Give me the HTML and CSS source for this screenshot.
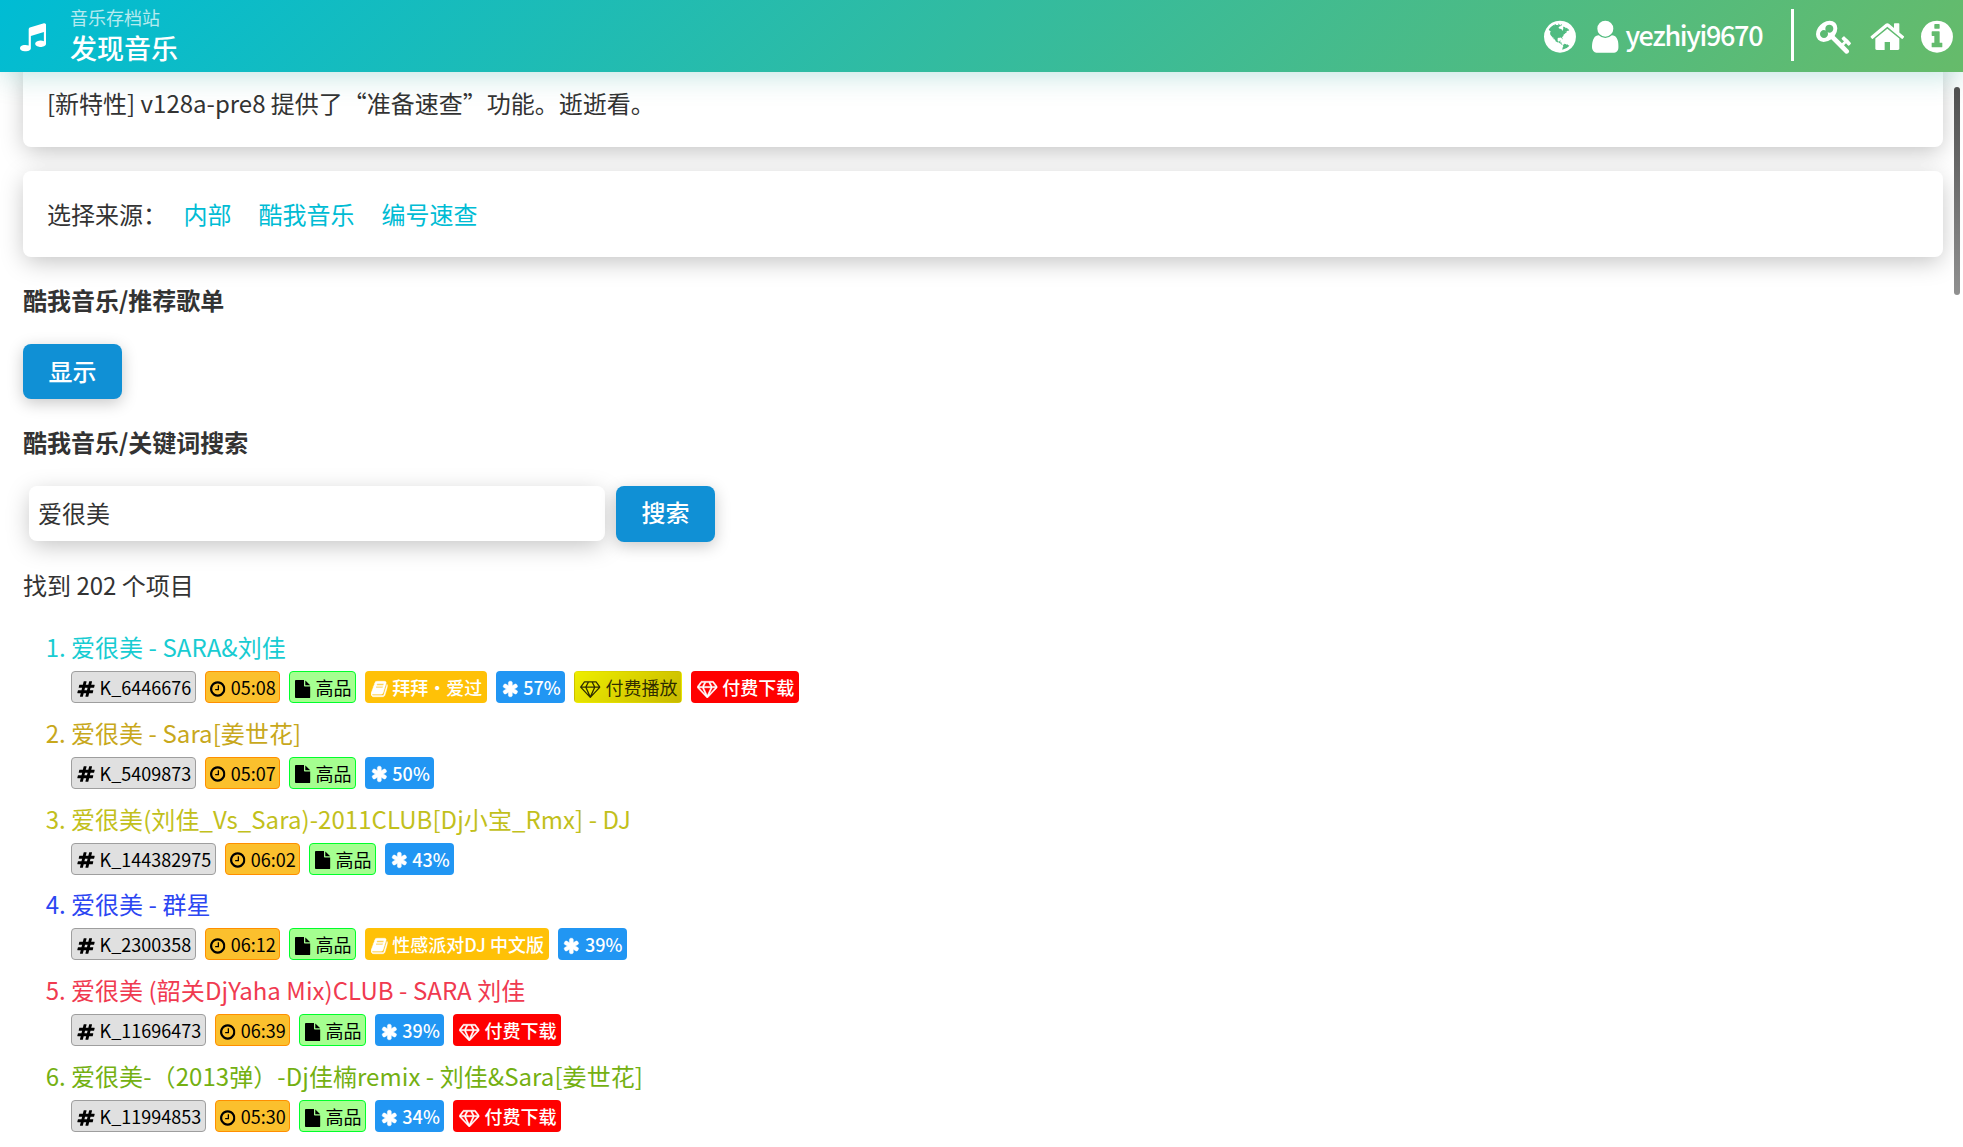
FILE: index.html
```html
<!DOCTYPE html>
<html lang="zh-CN">
<head>
<meta charset="utf-8">
<title>发现音乐 - 音乐存档站</title>
<link rel="stylesheet" href="styles.css">
</head>
<body>
<svg class="sprite" aria-hidden="true">
  <symbol id="music" viewBox="128 0 1536 1792"><path d="M1664 224v1120q0 50-34 89t-86 60.5-103.5 32-96.5 10.5-96.5-10.5-103.5-32-86-60.5-34-89 34-89 86-60.5 103.5-32 96.5-10.5q105 0 192 39v-537l-768 237v709q0 50-34 89t-86 60.5-103.5 32-96.5 10.5-96.5-10.5-103.5-32-86-60.5-34-89 34-89 86-60.5 103.5-32 96.5-10.5q105 0 192 39v-967q0-31 19-56.5t49-35.5l832-256q12-4 28-4 40 0 68 28t28 68z"/></symbol>
  <symbol id="hashtag" viewBox="0 0 1792 1792"><path d="M991 1024l64-256h-254l-64 256h254zm768-504l-56 224q-7 24-31 24h-327l-64 256h311q15 0 25 12 10 14 6 28l-56 224q-5 24-31 24h-327l-81 328q-7 24-31 24h-224q-16 0-26-12-9-12-6-28l78-312h-254l-81 328q-7 24-31 24h-225q-15 0-25-12-9-12-6-28l78-312h-311q-15 0-25-12-9-12-6-28l56-224q7-24 31-24h327l64-256h-311q-15 0-25-12-10-14-6-28l56-224q5-24 31-24h327l81-328q7-24 32-24h224q15 0 25 12 9 12 6 28l-78 312h254l81-328q7-24 32-24h224q15 0 25 12 9 12 6 28l-78 312h311q15 0 25 12 9 12 6 28z"/></symbol>
  <symbol id="clock" viewBox="128 0 1536 1792"><path d="M1024 544v448q0 14-9 23t-23 9h-320q-14 0-23-9t-9-23v-64q0-14 9-23t23-9h224v-352q0-14 9-23t23-9h64q14 0 23 9t9 23zm416 352q0-148-73-273t-198-198-273-73-273 73-198 198-73 273 73 273 198 198 273 73 273-73 198-198 73-273zm224 0q0 209-103 385.5t-279.5 279.5-385.5 103-385.5-103-279.5-279.5-103-385.5 103-385.5 279.5-279.5 385.5-103 385.5 103 279.5 279.5 103 385.5z"/></symbol>
  <symbol id="file" viewBox="128 0 1536 1792"><path d="M1152 512v-472q22 14 36 28l408 408q14 14 28 36h-472zm-128 32q0 40 28 68t68 28h544v1056q0 40-28 68t-68 28h-1344q-40 0-68-28t-28-68v-1600q0-40 28-68t68-28h800v544z"/></symbol>
  <symbol id="book" viewBox="64 0 1664 1792"><path d="M1703 478q40 57 18 129l-275 906q-19 64-76.5 107.5t-122.5 43.5h-923q-77 0-148.5-53.5t-99.5-131.5q-24-67-2-127 0-4 3-27t4-37q1-8-3-21.5t-3-19.5q2-11 8-21t16.5-23.5 16.5-23.5q23-38 45-91.5t30-91.5q3-10 .5-30t-.5-28q3-11 17-28t17-23q21-36 42-92t25-90q1-9-2.5-32t.5-28q4-13 22-30.5t22-22.5q19-26 42.5-84.5t27.5-96.5q1-8-3-25.5t-2-26.5q2-8 9-18t18-23 17-21q8-12 16.5-30.5t15-35 16-36 19.5-32 26.5-23.5 36-11.5 47.5 5.5l-1 3q38-9 51-9h761q74 0 114 56t18 130l-274 906q-36 119-71.5 153.5t-128.5 34.5h-869q-27 0-38 15-11 16-1 43 24 70 144 70h923q29 0 56-15.5t35-41.5l300-987q7-22 5-57 38 15 59 43zm-1064 2q-4 13 2 22.5t20 9.5h608q13 0 25.5-9.5t16.5-22.5l21-64q4-13-2-22.5t-20-9.5h-608q-13 0-25.5 9.5t-16.5 22.5zm-83 256q-4 13 2 22.5t20 9.5h608q13 0 25.5-9.5t16.5-22.5l21-64q4-13-2-22.5t-20-9.5h-608q-13 0-25.5 9.5t-16.5 22.5z"/></symbol>
  <symbol id="asterisk" viewBox="64 0 1664 1792"><path d="M1546 1050q46 26 59.5 77.5t-12.5 97.5l-64 110q-26 46-77.5 59.5t-97.5-12.5l-266-153v307q0 52-38 90t-90 38h-128q-52 0-90-38t-38-90v-307l-266 153q-46 26-97.5 12.5t-77.5-59.5l-64-110q-26-46-12.5-97.5t59.5-77.5l266-154-266-154q-46-26-59.5-77.5t12.5-97.5l64-110q26-46 77.5-59.5t97.5 12.5l266 153v-307q0-52 38-90t90-38h128q52 0 90 38t38 90v307l266-153q46-26 97.5-12.5t77.5 59.5l64 110q26 46 12.5 97.5t-59.5 77.5l-266 154z"/></symbol>
  <symbol id="diamond" viewBox="0 0 2048 1792"><path d="M212 768l623 665-300-665h-323zm812 772l349-772h-698zm-486-900l204-384h-262l-288 384h346zm675 793l623-665h-323zm-530-793h682l-204-384h-274zm827 0h346l-288-384h-262zm141-486l384 512q14 18 13 41.5t-17 40.5l-960 1024q-18 20-47 20t-47-20l-960-1024q-16-17-17-40.5t13-41.5l384-512q18-26 51-26h1152q33 0 51 26z"/></symbol>
  <symbol id="user" viewBox="256 0 1280 1792"><path d="M1536 1399q0 109-62.5 187t-150.5 78h-854q-88 0-150.5-78t-62.5-187q0-85 8.5-160.5t31.5-152 58.5-131 94-89 134.5-34.5q131 128 313 128t313-128q76 0 134.5 34.5t94 89 58.5 131 31.5 152 8.5 160.5zm-256-887q0 159-112.5 271.5t-271.5 112.5-271.5-112.5-112.5-271.5 112.5-271.5 271.5-112.5 271.5 112.5 112.5 271.5z"/></symbol>
  <symbol id="globe" viewBox="128 0 1536 1792"><path d="M896 128q209 0 385.5 103t279.5 279.5 103 385.5-103 385.5-279.5 279.5-385.5 103-385.5-103-279.5-279.5-103-385.5 103-385.5 279.5-279.5 385.5-103zm274 521q-2 1-9.5 9.5t-13.5 9.5q2 0 4.5-5t5-11 3.5-7q6-7 22-15 14-6 52-12 34-8 51 11-2-2 9.5-13t14.5-12q3-2 15-4.5t15-7.5l2-22q-12 1-17.5-7t-6.5-21q0 2-6 8 0-7-4.5-8t-11.5 1-9 1q-10-3-15-7.5t-8-16.5-4-15q-2-5-9.5-11t-9.5-10q-1-2-2.5-5.5t-3-6.5-4-5.5-5.5-2.5-7 5-7.5 10-4.5 5q-3-2-6-1.5t-4.5 1-4.5 3-5 3.5q-3 2-8.5 3t-8.5 2q15-5-1-11-10-4-16-3 9-4 7.5-12t-8.5-14h5q-1-4-8.5-8.5t-17.5-8.5-13-6q-8-5-34-9.5t-33-.5q-5 6-4.5 10.5t4 14 3.5 12.5q1 6-5.5 13t-6.5 12q0 7 14 15.5t10 21.5q-3 8-16 16t-16 12q-5 8-1.5 18.5t10.5 16.5q2 2 1.5 4t-3.5 4.5-5.5 4-6.5 3.5l-3 2q-11 5-20.5-6t-13.5-26q-7-25-16-30-23-8-29 1-5-13-41-26-25-9-58-4 6-1 0-15-7-15-19-12 3-6 4-17.5t1-13.5q3-13 12-23 1-1 7-8.5t9.5-13.5.5-6q35 4 50-11 5-5 11.5-17t10.5-17q9-6 14-5.5t14.5 5.5 14.5 5q14 1 15.5-11t-7.5-20q12 1 3-17-4-7-8-9-12-4-27 5-8 4 2 8-1-1-9.5 10.5t-16.5 17.5-16-5q-1-1-5.5-13.5t-9.5-13.5q-8 0-16 15 3-8-11-15t-24-8q19-12-8-27-7-4-20.5-5t-19.5 4q-5 7-5.5 11.5t5 8 10.5 5.5 11.5 4 8.5 3q14 10 8 14-2 1-8.5 3.5t-11.5 4.5-6 4q-3 4 0 14t-2 14q-5-5-9-17.5t-7-16.5q7 9-25 6l-10-1q-4 0-16 2t-20.5 1-13.5-8q-4-8 0-20 1-4 4-2-4-3-11-9.5t-10-8.5q-46 15-94 41 6 1 12-1 5-2 13-6.5t10-5.5q34-14 42-7l5-5q14 16 20 25-7-4-30-1-20 6-22 12 7 12 5 18-4-3-11.5-10t-14.5-11-15-5q-16 0-22 1-146 80-235 222 7 7 12 8 4 1 5 9t2.5 11 11.5-3q9 8 3 19 1-1 44 27 19 17 21 21 3 11-10 18-1-2-9-9t-9-4q-3 5 .5 18.5t10.5 12.5q-7 0-9.5 16t-2.5 35.5-1 23.5l2 1q-3 12 5.5 34.5t21.5 19.5q-13 3 20 43 6 8 8 9 3 2 12 7.5t15 10 10 10.5q4 5 10 22.5t14 23.5q-2 6 9.5 20t10.5 23q-1 0-2.5 1t-2.5 1q3 7 15.5 14t15.5 13q1 3 2 10t3 11 8 2q2-20-24-62-15-25-17-29-3-5-5.5-15.5t-4.5-14.5q2 0 6 1.5t8.5 3.5 7.5 4 2 3q-3 7 2 17.5t12 18.5 17 19 12 13q6 6 14 19.5t0 13.5q9 0 20 10.5t17 19.5q5 8 8 26t5 24q2 7 8.5 13.5t12.5 9.5l16 8 13 7q5 2 18.5 10.5t21.5 11.5q10 4 16 4t14.5-2.5 13.5-3.5q15-2 29 15t21 21q36 19 55 11-2 1 .5 7.5t8 15.5 9 14.5 5.5 8.5q5 6 18 15t18 15q6-4 7-9-3 8 7 20t18 10q14-3 14-32-31 15-49-18 0-1-2.5-5.5t-4-8.5-2.5-8.5 0-7.5 5-3q9 0 10-3.5t-2-12.5-4-13q-1-8-11-20t-12-15q-5 9-16 8t-16-9q0 1-1.5 5.5t-1.5 6.5q-13 0-15-1 1-3 2.5-17.5t3.5-22.5q1-4 5.5-12t7.5-14.5 4-12.5-4.5-9.5-17.5-2.5q-19 1-26 20-1 3-3 10.5t-5 11.5-9 7q-7 3-24 2t-24-5q-13-8-22.5-29t-9.5-37q0-10 2.5-26.5t3-25-5.5-24.5q3-2 9-9.5t10-10.5q2-1 4.5-1.5t4.5 0 4-1.5 3-6q-1-1-4-3-3-3-4-3 7 3 28.5-1.5t27.5 1.5q15 11 22-2 0-1-2.5-9.5t-.5-13.5q5 27 29 9 3 3 15.5 5t17.5 5q3 2 7 5.5t5.5 4.5 5-.5 8.5-6.5q10 14 12 24 11 40 19 44 7 3 11 2t4.5-9.5 0-14-1.5-12.5l-1-8v-18l-1-8q-15-3-18.5-12t1.5-18.5 15-18.5q1-1 8-3.5t15.5-6.5 12.5-8q21-19 15-35 7 0 11-9-1 0-5-3t-7.5-5-4.5-2q9-5 2-16 5-3 7.5-11t7.5-10q9 12 21 2 8-8 1-16 5-7 20.5-10.5t18.5-9.5q7 2 8-2t1-12 3-12q4-5 15-9t13-5l17-11q3-4 0-4 18 2 31-11 10-11-6-20 3-6-3-9.5t-15-5.5q3-1 11.5-.5t10.5-1.5q15-10-7-16-17-5-43 12zm-163 877q206-36 351-189-3-3-12.5-4.5t-12.5-3.5q-18-7-24-8 1-7-2.5-13t-8-9-12.5-8-11-7q-2-2-7-6t-7-5.5-7.5-4.5-8.5-2-10 1l-3 1q-3 1-5.5 2.5t-5.5 3-4 3 0 2.5q-21-17-36-22-5-1-11-5.5t-10.5-7-10-1.5-11.5 7q-5 5-6 15t-2 13q-7-5 0-17.5t2-18.5q-3-6-10.5-4.5t-12 4.5-11.5 8.5-9 6.5-8.5 5.5-8.5 7.5q-3 4-6 12t-5 11q-2-4-11.5-6.5t-9.5-5.5q2 10 4 35t5 38q7 31-12 48-27 25-29 40-4 22 12 26 0 7-8 20.5t-7 21.5q0 6 2 16z"/></symbol>
  <symbol id="key" viewBox="0 0 1792 1792"><path d="M832 512q0-80-56-136t-136-56-136 56-56 136q0 42 19 83-41-19-83-19-80 0-136 56t-56 136 56 136 136 56 136-56 56-136q0-42-19-83 41 19 83 19 80 0 136-56t56-136zm851 704q0 17-49 66t-66 49q-9 0-28.5-16t-36.5-33-38.5-40-24.5-26l-96 96 220 220q28 28 28 68 0 42-39 81t-81 39q-40 0-68-28l-671-671q-176 131-365 131-163 0-265.5-102.5t-102.5-265.5q0-160 95-313t248-248 313-95q163 0 265.5 102.5t102.5 265.5q0 189-131 365l355 355 96-96q-3-3-26-24.5t-40-38.5-33-36.5-16-28.5q0-17 49-66t66-49q13 0 23 10 6 6 46 44.5t82 79.5 86.5 86 73 78 28.5 41z"/></symbol>
  <symbol id="home" viewBox="64 0 1664 1792"><path d="M1472 992v480q0 26-19 45t-45 19h-384v-384h-256v384h-384q-26 0-45-19t-19-45v-480q0-1 .5-3t.5-3l575-474 575 474q1 2 1 6zm223-69l-62 74q-8 9-21 11h-3q-13 0-21-7l-692-577-692 577q-12 8-24 7-13-2-21-11l-62-74q-8-10-7-23.5t11-21.5l719-599q32-26 76-26t76 26l244 204v-195q0-14 9-23t23-9h192q14 0 23 9t9 23v408l219 182q10 8 11 21.5t-7 23.5z"/></symbol>
  <symbol id="info" viewBox="128 0 1536 1792"><path d="M1152 1376v-160q0-14-9-23t-23-9h-96v-512q0-14-9-23t-23-9h-320q-14 0-23 9t-9 23v160q0 14 9 23t23 9h96v320h-96q-14 0-23 9t-9 23v160q0 14 9 23t23 9h448q14 0 23-9t9-23zm-128-896v-160q0-14-9-23t-23-9h-192q-14 0-23 9t-9 23v160q0 14 9 23t23 9h192q14 0 23-9t9-23zm640 416q0 209-103 385.5t-279.5 279.5-385.5 103-385.5-103-279.5-279.5-103-385.5 103-385.5 279.5-279.5 385.5-103 385.5 103 279.5 279.5 103 385.5z"/></symbol>
</svg>

<header class="topbar">
  <svg class="icon logo w12"><use href="#music"/></svg>
  <div class="titles">
    <div class="site">音乐存档站</div>
    <div class="page">发现音乐</div>
  </div>
  <nav class="actions">
    <svg class="icon w12"><use href="#globe"/></svg>
    <span class="account"><svg class="icon w10"><use href="#user"/></svg><span class="name">yezhiyi9670</span></span>
    <span class="divider"></span>
    <svg class="icon w14"><use href="#key"/></svg>
    <svg class="icon w13"><use href="#home"/></svg>
    <svg class="icon w12"><use href="#info"/></svg>
  </nav>
</header>

<main class="content">
  <section class="card notice">[新特性] v128a-pre8 提供了“准备速查”功能。逝逝看。</section>
  <section class="card sources"><span>选择来源：</span><a>内部</a><a>酷我音乐</a><a>编号速查</a></section>

  <h2 class="heading">酷我音乐/推荐歌单</h2>
  <div class="row"><button class="btn">显示</button></div>
  <h2 class="heading">酷我音乐/关键词搜索</h2>
  <div class="row search"><input class="field" type="text" value="爱很美"><button class="btn">搜索</button></div>
  <p class="count">找到 202 个项目</p>

  <ol class="songs">
    <li class="song c1"><div class="name">爱很美 - SARA&amp;刘佳</div>
      <div class="tags">
        <span class="tag id"><svg class="icon w14"><use href="#hashtag"/></svg> K_6446676</span>
        <span class="tag time"><svg class="icon w12"><use href="#clock"/></svg> 05:08</span>
        <span class="tag quality"><svg class="icon w12"><use href="#file"/></svg> 高品</span>
        <span class="tag album"><svg class="icon w13"><use href="#book"/></svg> 拜拜·爱过</span>
        <span class="tag hot"><svg class="icon w13"><use href="#asterisk"/></svg> 57%</span>
        <span class="tag payplay"><svg class="icon w16"><use href="#diamond"/></svg> 付费播放</span>
        <span class="tag paydown"><svg class="icon w16"><use href="#diamond"/></svg> 付费下载</span>
      </div></li>
    <li class="song c2"><div class="name">爱很美 - Sara[姜世花]</div>
      <div class="tags">
        <span class="tag id"><svg class="icon w14"><use href="#hashtag"/></svg> K_5409873</span>
        <span class="tag time"><svg class="icon w12"><use href="#clock"/></svg> 05:07</span>
        <span class="tag quality"><svg class="icon w12"><use href="#file"/></svg> 高品</span>
        <span class="tag hot"><svg class="icon w13"><use href="#asterisk"/></svg> 50%</span>
      </div></li>
    <li class="song c3"><div class="name">爱很美(刘佳_Vs_Sara)-2011CLUB[Dj小宝_Rmx] - DJ</div>
      <div class="tags">
        <span class="tag id"><svg class="icon w14"><use href="#hashtag"/></svg> K_144382975</span>
        <span class="tag time"><svg class="icon w12"><use href="#clock"/></svg> 06:02</span>
        <span class="tag quality"><svg class="icon w12"><use href="#file"/></svg> 高品</span>
        <span class="tag hot"><svg class="icon w13"><use href="#asterisk"/></svg> 43%</span>
      </div></li>
    <li class="song c4"><div class="name">爱很美 - 群星</div>
      <div class="tags">
        <span class="tag id"><svg class="icon w14"><use href="#hashtag"/></svg> K_2300358</span>
        <span class="tag time"><svg class="icon w12"><use href="#clock"/></svg> 06:12</span>
        <span class="tag quality"><svg class="icon w12"><use href="#file"/></svg> 高品</span>
        <span class="tag album"><svg class="icon w13"><use href="#book"/></svg> 性感派对DJ 中文版</span>
        <span class="tag hot"><svg class="icon w13"><use href="#asterisk"/></svg> 39%</span>
      </div></li>
    <li class="song c5"><div class="name">爱很美 (韶关DjYaha Mix)CLUB - SARA 刘佳</div>
      <div class="tags">
        <span class="tag id"><svg class="icon w14"><use href="#hashtag"/></svg> K_11696473</span>
        <span class="tag time"><svg class="icon w12"><use href="#clock"/></svg> 06:39</span>
        <span class="tag quality"><svg class="icon w12"><use href="#file"/></svg> 高品</span>
        <span class="tag hot"><svg class="icon w13"><use href="#asterisk"/></svg> 39%</span>
        <span class="tag paydown"><svg class="icon w16"><use href="#diamond"/></svg> 付费下载</span>
      </div></li>
    <li class="song c6"><div class="name">爱很美-（2013弹）-Dj佳楠remix - 刘佳&amp;Sara[姜世花]</div>
      <div class="tags">
        <span class="tag id"><svg class="icon w14"><use href="#hashtag"/></svg> K_11994853</span>
        <span class="tag time"><svg class="icon w12"><use href="#clock"/></svg> 05:30</span>
        <span class="tag quality"><svg class="icon w12"><use href="#file"/></svg> 高品</span>
        <span class="tag hot"><svg class="icon w13"><use href="#asterisk"/></svg> 34%</span>
        <span class="tag paydown"><svg class="icon w16"><use href="#diamond"/></svg> 付费下载</span>
      </div></li>
  </ol>
</main>
<div class="scrollbar"></div>
</body>
</html>
```

FILE: styles.css
```css
* { box-sizing: border-box; }
body {
  margin: 0;
  height: 1147px;
  overflow: hidden;
  position: relative;
  background: #fff;
  color: #333;
  font: 24px/38px "Noto Sans CJK SC", "Noto Sans", sans-serif;
}
.sprite { display: none; }

/* Icons: 1em tall, width by glyph advance (units of 1/14 em) */
.icon { height: 1em; fill: currentColor; vertical-align: -.143em; flex: none; overflow: visible; }
.w10 { width: .7143em; }
.w12 { width: .8571em; }
.w13 { width: .9286em; }
.w14 { width: 1em; }
.w16 { width: 1.1429em; }

.topbar {
  position: relative;
  z-index: 2;
  height: 72px;
  padding: 0 10px 0 20px;
  display: flex;
  align-items: center;
  color: #fff;
  background: linear-gradient(135deg, #00bcd4, #66bb6a);
  box-shadow: 0 0 32px rgba(0, 150, 136, .3);
}
.logo { font-size: 30.4px; margin-top: 1px; }
.titles { margin-left: 24px; padding-bottom: 3px; }
.site { font-size: 18px; line-height: 26px; opacity: .7; }
.page { font-size: 27px; line-height: 36px; font-weight: 500; }
.actions { margin-left: auto; padding-top: 2px; display: flex; align-items: center; font-size: 37.33px; }
.account { display: flex; align-items: center; margin-left: 16px; }
.account .name { font-size: 27px; font-weight: 500; letter-spacing: -1.35px; margin: 0 1.35px 4px 7px; line-height: 40px; }
.divider { width: 3px; height: 52px; margin: 0 22px 4px 27px; background: #fff; }
.actions > .w13 { margin: 0 16.5px 0 17px; }

.content { padding: 0 20px 0 23px; }
.card {
  padding: 24px;
  border-radius: 8px;
  background: #fff;
  box-shadow: 0 6px 24px -2px rgba(0, 0, 0, .25);
}
.notice { margin-top: -12px; height: 87px; }
.sources { margin-top: 24px; height: 86px; display: flex; }
.sources a { color: #00bcd4; margin-right: 27px; }
.sources span { margin-right: 16.5px; }
.heading { margin: 24px 0 25px; font-size: 24px; line-height: 38px; font-weight: 700; }
.row { display: flex; height: 56px; margin-bottom: -1px; }
.heading + .row + .heading { margin-top: 24px; }
.btn {
  width: 99px;
  height: 55px;
  border: 0;
  border-radius: 8px;
  padding: 0 0 2px;
  background: #1090d5;
  color: #fff;
  font: 500 24px/38px "Noto Sans CJK SC", sans-serif;
  box-shadow: 0 4px 16px rgba(0, 0, 0, .22);
}
.field {
  width: 576px;
  height: 55px;
  margin: 0 11px 0 6px;
  padding: 0 9px 2px;
  border: 0;
  border-radius: 8px;
  background: #fff;
  color: #333;
  font: 24px "Noto Sans CJK SC", sans-serif;
  box-shadow: 0 6px 24px -2px rgba(0, 0, 0, .25);
}
.search .btn { height: 56px; padding-bottom: 4px; }
.count { margin: 25px 0 22px; }

.songs { margin: 0; padding: 0 0 0 48px; }
.song { height: 85.8px; line-height: 42px; }
.song .name { letter-spacing: .06px; }
.tags { display: flex; gap: 9px; margin-top: 3px; }
.tag {
  height: 32px;
  padding: 0 3.7px 0 4.5px;
  border: 1px solid transparent;
  border-radius: 4px;
  font-size: 18px;
  line-height: 30px;
  white-space: nowrap;
  color: #000;
}
.tag .icon { margin-right: 1px; }
.id { background: #e0e0e0; border-color: #9e9e9e; }
.time { background: #fbc02d; border-color: #ff8f00; }
.quality { background: #a5ff90; border-color: #00ff2b; }
.album { background: #ffc107; color: #fff; font-weight: 500; }
.hot { background: #2196f3; color: #fff; font-weight: 500; }
.payplay { background: linear-gradient(135deg, #eeee00, #c8b900); color: rgba(0, 0, 0, .8); }
.paydown { background: #f00; color: #fff; font-weight: 500; }
.album .icon, .hot .icon, .paydown .icon { stroke: currentColor; stroke-width: 50; }
.c1 { color: #18ccd2; }
.c2 { color: #c8a81c; }
.c3 { color: #c2c01c; }
.c4 { color: #2c46f2; }
.c5 { color: #f03a50; }
.c6 { color: #74b012; }

.scrollbar {
  position: absolute;
  z-index: 3;
  left: 1954px;
  top: 87px;
  width: 6px;
  height: 208px;
  border-radius: 3px;
  background: linear-gradient(#505050, #909090);
}
```
